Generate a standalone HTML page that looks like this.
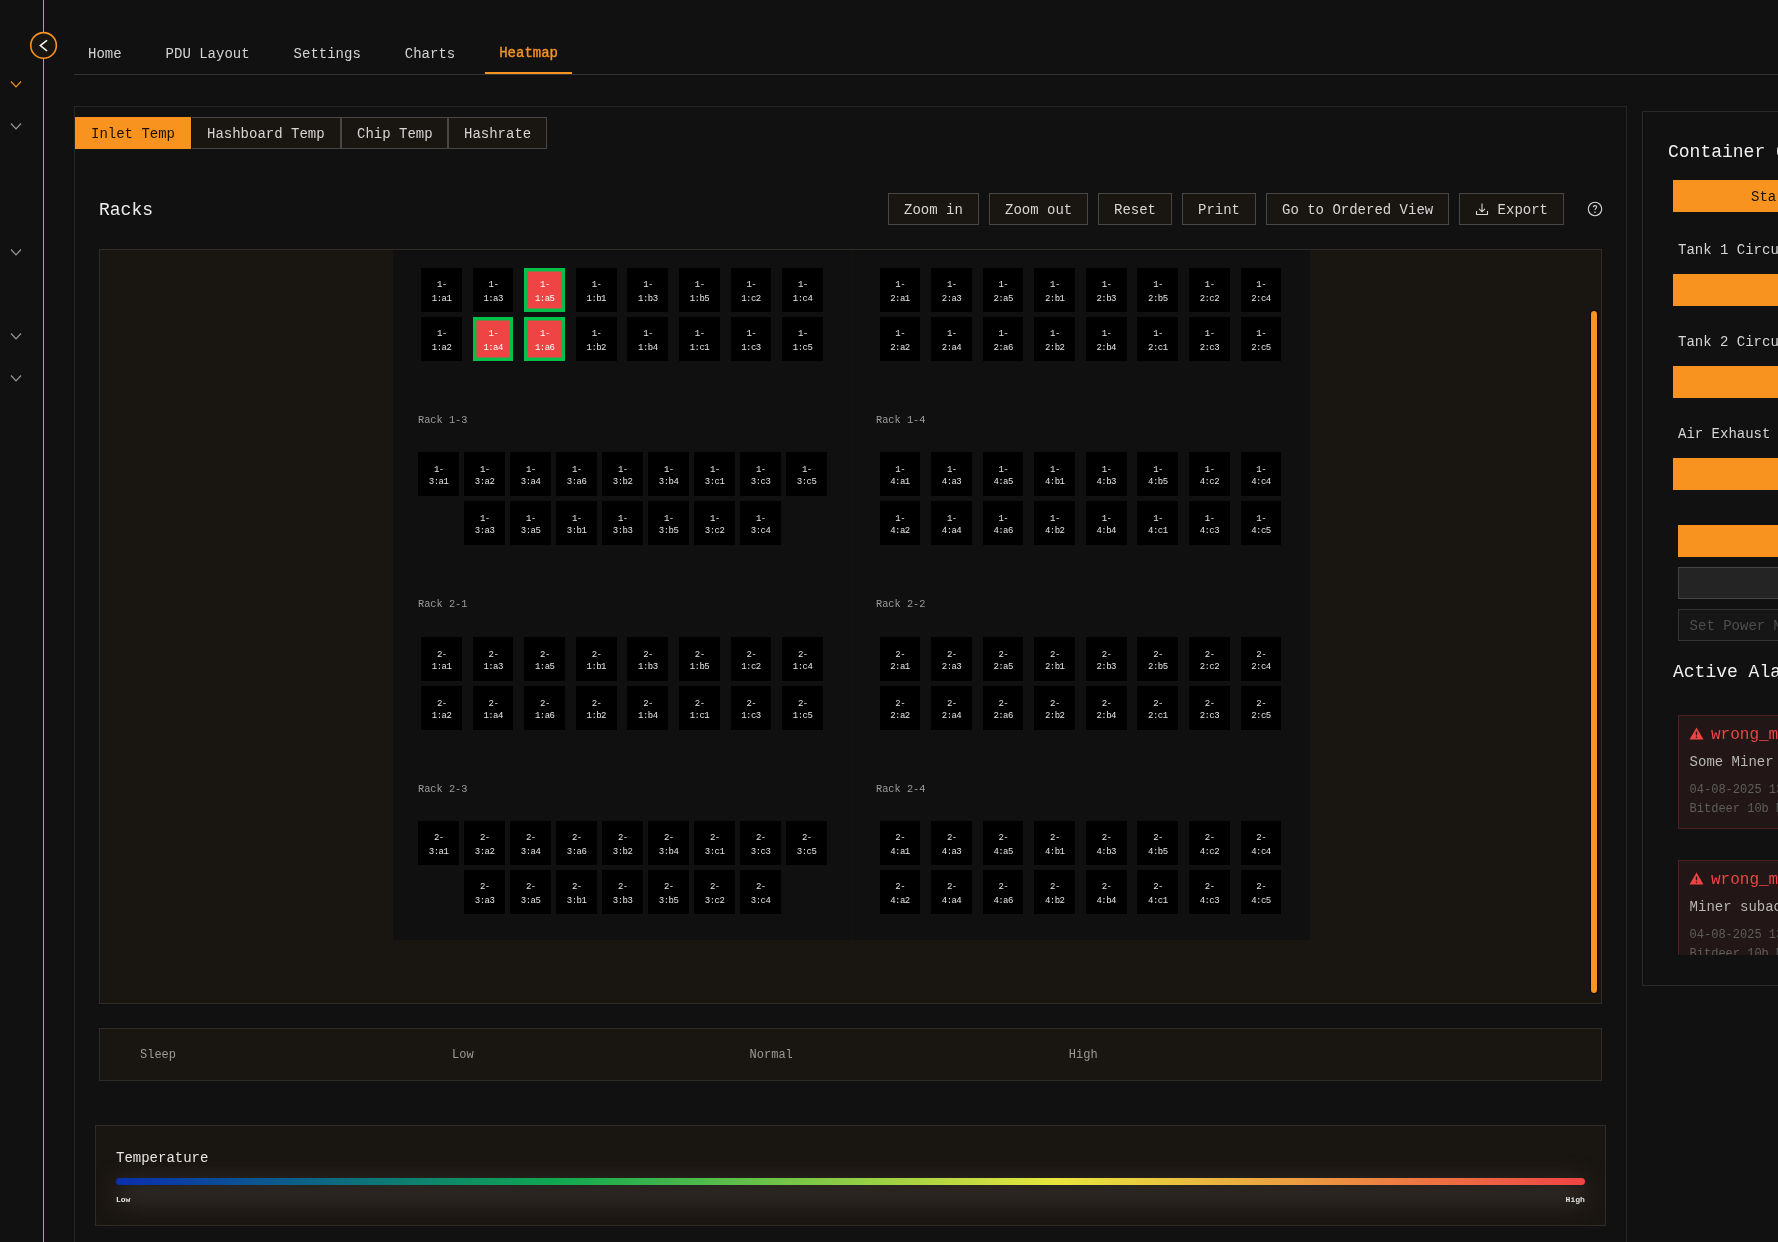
<!DOCTYPE html>
<html><head><meta charset="utf-8"><title>Heatmap</title>
<style>
html,body{margin:0;padding:0;}
body{width:1778px;height:1242px;overflow:hidden;background:#111111;position:relative;font-family:"Liberation Mono",monospace;}
.r{position:absolute;box-sizing:content-box;}
.t{position:absolute;line-height:1;white-space:pre;}
.c{position:absolute;width:40.7px;height:44px;background:#000;color:#e4e4e4;font-size:9px;font-weight:normal;line-height:14px;text-align:center;}
.c span{position:absolute;left:0;right:0;top:9.6px;letter-spacing:-0.55px;text-indent:0.55px;}
.c.s12 span{top:12px;line-height:12px;}
.c.red{background:#ef4444;box-shadow:inset 0 0 0 3.4px #03c04a;color:#fff;}
</style></head><body><div id="root" style="position:absolute;left:0;top:0;width:1778px;height:1242px;will-change:transform">
<div class="r" style="left:43px;top:0px;width:1px;height:1242px;background:#f7931e"></div>
<svg class="r" style="left:26px;top:28px" width="36" height="36" viewBox="26 28 36 36"><circle cx="43.55" cy="45.4" r="12.8" fill="#191511" stroke="#f7931e" stroke-width="1.6"/><polyline points="46.6,40.6 40.3,45.6 46.6,50.6" fill="none" stroke="#f4f4f4" stroke-width="1.5" stroke-linecap="round"/></svg>
<svg class="r" style="left:10px;top:79.5px" width="12" height="10" viewBox="0 0 12 10"><polyline points="1,1.5 6,7 11,1.5" fill="none" stroke="#f7931e" stroke-width="1.15"/></svg>
<svg class="r" style="left:10px;top:121.5px" width="12" height="10" viewBox="0 0 12 10"><polyline points="1,1.5 6,7 11,1.5" fill="none" stroke="#9a9a9a" stroke-width="1.15"/></svg>
<svg class="r" style="left:10px;top:247.6px" width="12" height="10" viewBox="0 0 12 10"><polyline points="1,1.5 6,7 11,1.5" fill="none" stroke="#9a9a9a" stroke-width="1.15"/></svg>
<svg class="r" style="left:10px;top:331.7px" width="12" height="10" viewBox="0 0 12 10"><polyline points="1,1.5 6,7 11,1.5" fill="none" stroke="#9a9a9a" stroke-width="1.15"/></svg>
<svg class="r" style="left:10px;top:373.6px" width="12" height="10" viewBox="0 0 12 10"><polyline points="1,1.5 6,7 11,1.5" fill="none" stroke="#9a9a9a" stroke-width="1.15"/></svg>
<div class="r" style="left:74px;top:74px;width:1704px;height:1px;background:#333333"></div>
<div class="t" style="left:88.00px;top:47.27px;font-size:14px;color:#d4d4d4;font-weight:normal;">Home</div>
<div class="t" style="left:165.60px;top:47.27px;font-size:14px;color:#d4d4d4;font-weight:normal;">PDU Layout</div>
<div class="t" style="left:293.60px;top:47.27px;font-size:14px;color:#d4d4d4;font-weight:normal;">Settings</div>
<div class="t" style="left:404.80px;top:47.27px;font-size:14px;color:#d4d4d4;font-weight:normal;">Charts</div>
<div class="t" style="left:499.20px;top:46.27px;font-size:14px;color:#f7931e;font-weight:normal;-webkit-text-stroke:0.4px #f7931e;">Heatmap</div>
<div class="r" style="left:485px;top:72px;width:87px;height:2px;background:#f7931e"></div>
<div class="r" style="left:74px;top:106px;width:1551px;height:1300px;border:1px solid #262626"></div>
<div class="r" style="left:191px;top:117px;width:148px;height:30px;background:#191511;border:1px solid #474747"></div>
<div class="r" style="left:341px;top:117px;width:105px;height:30px;background:#191511;border:1px solid #474747"></div>
<div class="r" style="left:448px;top:117px;width:97px;height:30px;background:#191511;border:1px solid #474747"></div>
<div class="r" style="left:191px;top:116px;width:1px;height:34px;background:#0a0d12"></div>
<div class="r" style="left:75px;top:117px;width:116px;height:32px;background:#f7931e"></div>
<div class="t" style="left:91.00px;top:127.27px;font-size:14px;color:#1a1208;font-weight:normal;">Inlet Temp</div>
<div class="t" style="left:207.00px;top:127.27px;font-size:14px;color:#d6d6d6;font-weight:normal;">Hashboard Temp</div>
<div class="t" style="left:357.00px;top:127.27px;font-size:14px;color:#d6d6d6;font-weight:normal;">Chip Temp</div>
<div class="t" style="left:464.00px;top:127.27px;font-size:14px;color:#d6d6d6;font-weight:normal;">Hashrate</div>
<div class="t" style="left:99.00px;top:201.21px;font-size:18px;color:#ececec;font-weight:normal;">Racks</div>
<div class="r" style="left:888px;top:193px;width:89px;height:30px;background:#191511;border:1px solid #474747"></div>
<div class="t" style="left:904.00px;top:203.27px;font-size:14px;color:#d6d6d6;font-weight:normal;">Zoom in</div>
<div class="r" style="left:989px;top:193px;width:97px;height:30px;background:#191511;border:1px solid #474747"></div>
<div class="t" style="left:1005.00px;top:203.27px;font-size:14px;color:#d6d6d6;font-weight:normal;">Zoom out</div>
<div class="r" style="left:1098px;top:193px;width:72px;height:30px;background:#191511;border:1px solid #474747"></div>
<div class="t" style="left:1114.00px;top:203.27px;font-size:14px;color:#d6d6d6;font-weight:normal;">Reset</div>
<div class="r" style="left:1182px;top:193px;width:72px;height:30px;background:#191511;border:1px solid #474747"></div>
<div class="t" style="left:1198.00px;top:203.27px;font-size:14px;color:#d6d6d6;font-weight:normal;">Print</div>
<div class="r" style="left:1266px;top:193px;width:181px;height:30px;background:#191511;border:1px solid #474747"></div>
<div class="t" style="left:1282.00px;top:203.27px;font-size:14px;color:#d6d6d6;font-weight:normal;">Go to Ordered View</div>
<div class="r" style="left:1459px;top:193px;width:103px;height:30px;background:#191511;border:1px solid #474747"></div>
<svg class="r" style="left:1475px;top:202px" width="14" height="14" viewBox="0 0 14 14"><path d="M7 1.5V9.5M4 6.8L7 9.8L10 6.8M1.5 9V12.5H12.5V9" fill="none" stroke="#d6d6d6" stroke-width="1.1"/></svg>
<div class="t" style="left:1497.60px;top:203.27px;font-size:14px;color:#d6d6d6;font-weight:normal;">Export</div>
<svg class="r" style="left:1587px;top:201px" width="16" height="16" viewBox="0 0 16 16"><circle cx="8" cy="8" r="6.7" fill="none" stroke="#d6d6d6" stroke-width="1.1"/><path d="M6.3 6.3C6.3 5.2 7 4.6 8 4.6C9 4.6 9.7 5.2 9.7 6.1C9.7 7.3 8 7.4 8 8.9" fill="none" stroke="#d6d6d6" stroke-width="1.1"/><circle cx="8" cy="11.3" r="0.8" fill="#d6d6d6"/></svg>
<div class="r" style="left:99px;top:249px;width:1501px;height:753px;border:1px solid #2f2b26;background:#191511"></div>
<div class="r" style="left:393px;top:250px;width:917px;height:690px;background:#101010;overflow:hidden">
<div class="r" style="left:458px;top:0px;width:1px;height:690px;background:#141311"></div>
<div class="c" style="left:28.20px;top:18.00px"><span>1-<br>1:a1</span></div>
<div class="c" style="left:79.77px;top:18.00px"><span>1-<br>1:a3</span></div>
<div class="c red" style="left:131.34px;top:18.00px"><span>1-<br>1:a5</span></div>
<div class="c" style="left:182.91px;top:18.00px"><span>1-<br>1:b1</span></div>
<div class="c" style="left:234.48px;top:18.00px"><span>1-<br>1:b3</span></div>
<div class="c" style="left:286.05px;top:18.00px"><span>1-<br>1:b5</span></div>
<div class="c" style="left:337.62px;top:18.00px"><span>1-<br>1:c2</span></div>
<div class="c" style="left:389.19px;top:18.00px"><span>1-<br>1:c4</span></div>
<div class="c" style="left:28.20px;top:67.00px"><span>1-<br>1:a2</span></div>
<div class="c red" style="left:79.77px;top:67.00px"><span>1-<br>1:a4</span></div>
<div class="c red" style="left:131.34px;top:67.00px"><span>1-<br>1:a6</span></div>
<div class="c" style="left:182.91px;top:67.00px"><span>1-<br>1:b2</span></div>
<div class="c" style="left:234.48px;top:67.00px"><span>1-<br>1:b4</span></div>
<div class="c" style="left:286.05px;top:67.00px"><span>1-<br>1:c1</span></div>
<div class="c" style="left:337.62px;top:67.00px"><span>1-<br>1:c3</span></div>
<div class="c" style="left:389.19px;top:67.00px"><span>1-<br>1:c5</span></div>
<div class="c" style="left:486.60px;top:18.00px"><span>1-<br>2:a1</span></div>
<div class="c" style="left:538.17px;top:18.00px"><span>1-<br>2:a3</span></div>
<div class="c" style="left:589.74px;top:18.00px"><span>1-<br>2:a5</span></div>
<div class="c" style="left:641.31px;top:18.00px"><span>1-<br>2:b1</span></div>
<div class="c" style="left:692.88px;top:18.00px"><span>1-<br>2:b3</span></div>
<div class="c" style="left:744.45px;top:18.00px"><span>1-<br>2:b5</span></div>
<div class="c" style="left:796.02px;top:18.00px"><span>1-<br>2:c2</span></div>
<div class="c" style="left:847.59px;top:18.00px"><span>1-<br>2:c4</span></div>
<div class="c" style="left:486.60px;top:67.00px"><span>1-<br>2:a2</span></div>
<div class="c" style="left:538.17px;top:67.00px"><span>1-<br>2:a4</span></div>
<div class="c" style="left:589.74px;top:67.00px"><span>1-<br>2:a6</span></div>
<div class="c" style="left:641.31px;top:67.00px"><span>1-<br>2:b2</span></div>
<div class="c" style="left:692.88px;top:67.00px"><span>1-<br>2:b4</span></div>
<div class="c" style="left:744.45px;top:67.00px"><span>1-<br>2:c1</span></div>
<div class="c" style="left:796.02px;top:67.00px"><span>1-<br>2:c3</span></div>
<div class="c" style="left:847.59px;top:67.00px"><span>1-<br>2:c5</span></div>
<div class="c s12" style="left:25.20px;top:202.35px"><span>1-<br>3:a1</span></div>
<div class="c s12" style="left:71.20px;top:202.35px"><span>1-<br>3:a2</span></div>
<div class="c s12" style="left:117.20px;top:202.35px"><span>1-<br>3:a4</span></div>
<div class="c s12" style="left:163.20px;top:202.35px"><span>1-<br>3:a6</span></div>
<div class="c s12" style="left:209.20px;top:202.35px"><span>1-<br>3:b2</span></div>
<div class="c s12" style="left:255.20px;top:202.35px"><span>1-<br>3:b4</span></div>
<div class="c s12" style="left:301.20px;top:202.35px"><span>1-<br>3:c1</span></div>
<div class="c s12" style="left:347.20px;top:202.35px"><span>1-<br>3:c3</span></div>
<div class="c s12" style="left:393.20px;top:202.35px"><span>1-<br>3:c5</span></div>
<div class="c s12" style="left:71.20px;top:251.35px"><span>1-<br>3:a3</span></div>
<div class="c s12" style="left:117.20px;top:251.35px"><span>1-<br>3:a5</span></div>
<div class="c s12" style="left:163.20px;top:251.35px"><span>1-<br>3:b1</span></div>
<div class="c s12" style="left:209.20px;top:251.35px"><span>1-<br>3:b3</span></div>
<div class="c s12" style="left:255.20px;top:251.35px"><span>1-<br>3:b5</span></div>
<div class="c s12" style="left:301.20px;top:251.35px"><span>1-<br>3:c2</span></div>
<div class="c s12" style="left:347.20px;top:251.35px"><span>1-<br>3:c4</span></div>
<div class="c s12" style="left:486.60px;top:202.35px"><span>1-<br>4:a1</span></div>
<div class="c s12" style="left:538.17px;top:202.35px"><span>1-<br>4:a3</span></div>
<div class="c s12" style="left:589.74px;top:202.35px"><span>1-<br>4:a5</span></div>
<div class="c s12" style="left:641.31px;top:202.35px"><span>1-<br>4:b1</span></div>
<div class="c s12" style="left:692.88px;top:202.35px"><span>1-<br>4:b3</span></div>
<div class="c s12" style="left:744.45px;top:202.35px"><span>1-<br>4:b5</span></div>
<div class="c s12" style="left:796.02px;top:202.35px"><span>1-<br>4:c2</span></div>
<div class="c s12" style="left:847.59px;top:202.35px"><span>1-<br>4:c4</span></div>
<div class="c s12" style="left:486.60px;top:251.35px"><span>1-<br>4:a2</span></div>
<div class="c s12" style="left:538.17px;top:251.35px"><span>1-<br>4:a4</span></div>
<div class="c s12" style="left:589.74px;top:251.35px"><span>1-<br>4:a6</span></div>
<div class="c s12" style="left:641.31px;top:251.35px"><span>1-<br>4:b2</span></div>
<div class="c s12" style="left:692.88px;top:251.35px"><span>1-<br>4:b4</span></div>
<div class="c s12" style="left:744.45px;top:251.35px"><span>1-<br>4:c1</span></div>
<div class="c s12" style="left:796.02px;top:251.35px"><span>1-<br>4:c3</span></div>
<div class="c s12" style="left:847.59px;top:251.35px"><span>1-<br>4:c5</span></div>
<div class="c s12" style="left:28.20px;top:386.70px"><span>2-<br>1:a1</span></div>
<div class="c s12" style="left:79.77px;top:386.70px"><span>2-<br>1:a3</span></div>
<div class="c s12" style="left:131.34px;top:386.70px"><span>2-<br>1:a5</span></div>
<div class="c s12" style="left:182.91px;top:386.70px"><span>2-<br>1:b1</span></div>
<div class="c s12" style="left:234.48px;top:386.70px"><span>2-<br>1:b3</span></div>
<div class="c s12" style="left:286.05px;top:386.70px"><span>2-<br>1:b5</span></div>
<div class="c s12" style="left:337.62px;top:386.70px"><span>2-<br>1:c2</span></div>
<div class="c s12" style="left:389.19px;top:386.70px"><span>2-<br>1:c4</span></div>
<div class="c s12" style="left:28.20px;top:435.70px"><span>2-<br>1:a2</span></div>
<div class="c s12" style="left:79.77px;top:435.70px"><span>2-<br>1:a4</span></div>
<div class="c s12" style="left:131.34px;top:435.70px"><span>2-<br>1:a6</span></div>
<div class="c s12" style="left:182.91px;top:435.70px"><span>2-<br>1:b2</span></div>
<div class="c s12" style="left:234.48px;top:435.70px"><span>2-<br>1:b4</span></div>
<div class="c s12" style="left:286.05px;top:435.70px"><span>2-<br>1:c1</span></div>
<div class="c s12" style="left:337.62px;top:435.70px"><span>2-<br>1:c3</span></div>
<div class="c s12" style="left:389.19px;top:435.70px"><span>2-<br>1:c5</span></div>
<div class="c s12" style="left:486.60px;top:386.70px"><span>2-<br>2:a1</span></div>
<div class="c s12" style="left:538.17px;top:386.70px"><span>2-<br>2:a3</span></div>
<div class="c s12" style="left:589.74px;top:386.70px"><span>2-<br>2:a5</span></div>
<div class="c s12" style="left:641.31px;top:386.70px"><span>2-<br>2:b1</span></div>
<div class="c s12" style="left:692.88px;top:386.70px"><span>2-<br>2:b3</span></div>
<div class="c s12" style="left:744.45px;top:386.70px"><span>2-<br>2:b5</span></div>
<div class="c s12" style="left:796.02px;top:386.70px"><span>2-<br>2:c2</span></div>
<div class="c s12" style="left:847.59px;top:386.70px"><span>2-<br>2:c4</span></div>
<div class="c s12" style="left:486.60px;top:435.70px"><span>2-<br>2:a2</span></div>
<div class="c s12" style="left:538.17px;top:435.70px"><span>2-<br>2:a4</span></div>
<div class="c s12" style="left:589.74px;top:435.70px"><span>2-<br>2:a6</span></div>
<div class="c s12" style="left:641.31px;top:435.70px"><span>2-<br>2:b2</span></div>
<div class="c s12" style="left:692.88px;top:435.70px"><span>2-<br>2:b4</span></div>
<div class="c s12" style="left:744.45px;top:435.70px"><span>2-<br>2:c1</span></div>
<div class="c s12" style="left:796.02px;top:435.70px"><span>2-<br>2:c3</span></div>
<div class="c s12" style="left:847.59px;top:435.70px"><span>2-<br>2:c5</span></div>
<div class="c" style="left:25.20px;top:571.05px"><span>2-<br>3:a1</span></div>
<div class="c" style="left:71.20px;top:571.05px"><span>2-<br>3:a2</span></div>
<div class="c" style="left:117.20px;top:571.05px"><span>2-<br>3:a4</span></div>
<div class="c" style="left:163.20px;top:571.05px"><span>2-<br>3:a6</span></div>
<div class="c" style="left:209.20px;top:571.05px"><span>2-<br>3:b2</span></div>
<div class="c" style="left:255.20px;top:571.05px"><span>2-<br>3:b4</span></div>
<div class="c" style="left:301.20px;top:571.05px"><span>2-<br>3:c1</span></div>
<div class="c" style="left:347.20px;top:571.05px"><span>2-<br>3:c3</span></div>
<div class="c" style="left:393.20px;top:571.05px"><span>2-<br>3:c5</span></div>
<div class="c" style="left:71.20px;top:620.05px"><span>2-<br>3:a3</span></div>
<div class="c" style="left:117.20px;top:620.05px"><span>2-<br>3:a5</span></div>
<div class="c" style="left:163.20px;top:620.05px"><span>2-<br>3:b1</span></div>
<div class="c" style="left:209.20px;top:620.05px"><span>2-<br>3:b3</span></div>
<div class="c" style="left:255.20px;top:620.05px"><span>2-<br>3:b5</span></div>
<div class="c" style="left:301.20px;top:620.05px"><span>2-<br>3:c2</span></div>
<div class="c" style="left:347.20px;top:620.05px"><span>2-<br>3:c4</span></div>
<div class="c" style="left:486.60px;top:571.05px"><span>2-<br>4:a1</span></div>
<div class="c" style="left:538.17px;top:571.05px"><span>2-<br>4:a3</span></div>
<div class="c" style="left:589.74px;top:571.05px"><span>2-<br>4:a5</span></div>
<div class="c" style="left:641.31px;top:571.05px"><span>2-<br>4:b1</span></div>
<div class="c" style="left:692.88px;top:571.05px"><span>2-<br>4:b3</span></div>
<div class="c" style="left:744.45px;top:571.05px"><span>2-<br>4:b5</span></div>
<div class="c" style="left:796.02px;top:571.05px"><span>2-<br>4:c2</span></div>
<div class="c" style="left:847.59px;top:571.05px"><span>2-<br>4:c4</span></div>
<div class="c" style="left:486.60px;top:620.05px"><span>2-<br>4:a2</span></div>
<div class="c" style="left:538.17px;top:620.05px"><span>2-<br>4:a4</span></div>
<div class="c" style="left:589.74px;top:620.05px"><span>2-<br>4:a6</span></div>
<div class="c" style="left:641.31px;top:620.05px"><span>2-<br>4:b2</span></div>
<div class="c" style="left:692.88px;top:620.05px"><span>2-<br>4:b4</span></div>
<div class="c" style="left:744.45px;top:620.05px"><span>2-<br>4:c1</span></div>
<div class="c" style="left:796.02px;top:620.05px"><span>2-<br>4:c3</span></div>
<div class="c" style="left:847.59px;top:620.05px"><span>2-<br>4:c5</span></div>
<div class="t" style="left:25.00px;top:164.91px;font-size:10.3px;color:#9c9c9c;font-weight:normal;">Rack 1-3</div>
<div class="t" style="left:483.00px;top:164.91px;font-size:10.3px;color:#9c9c9c;font-weight:normal;">Rack 1-4</div>
<div class="t" style="left:25.00px;top:349.26px;font-size:10.3px;color:#9c9c9c;font-weight:normal;">Rack 2-1</div>
<div class="t" style="left:483.00px;top:349.26px;font-size:10.3px;color:#9c9c9c;font-weight:normal;">Rack 2-2</div>
<div class="t" style="left:25.00px;top:533.61px;font-size:10.3px;color:#9c9c9c;font-weight:normal;">Rack 2-3</div>
<div class="t" style="left:483.00px;top:533.61px;font-size:10.3px;color:#9c9c9c;font-weight:normal;">Rack 2-4</div>
</div>
<div class="r" style="left:1591px;top:311px;width:6px;height:682px;border-radius:3px;background:#f7951f;box-shadow:0 0 0 1px #07090c"></div>
<div class="r" style="left:99px;top:1028px;width:1501px;height:51px;border:1px solid #2f2b26;background:#191511"></div>
<div class="t" style="left:140.00px;top:1048.81px;font-size:12px;color:#9a9a9a;font-weight:normal;">Sleep</div>
<div class="t" style="left:452.00px;top:1048.81px;font-size:12px;color:#9a9a9a;font-weight:normal;">Low</div>
<div class="t" style="left:749.60px;top:1048.81px;font-size:12px;color:#9a9a9a;font-weight:normal;">Normal</div>
<div class="t" style="left:1068.80px;top:1048.81px;font-size:12px;color:#9a9a9a;font-weight:normal;">High</div>
<div class="r" style="left:95px;top:1125px;width:1509px;height:99px;border:1px solid #2f2b26;background:#191511;overflow:hidden"><div style="position:absolute;left:21px;top:55px;width:1469px;height:22px;background:rgba(75,68,62,0.55);filter:blur(12px);border-radius:20px"></div></div>
<div class="t" style="left:116.00px;top:1151.27px;font-size:14px;color:#e6e6e6;font-weight:normal;">Temperature</div>
<div class="r" style="left:116px;top:1178px;width:1469px;height:7px;border-radius:4px;background:linear-gradient(90deg,#0a2eb0 0%,#10a850 30%,#e8e63e 64%,#ef4444 100%)"></div>
<div class="t" style="left:116.00px;top:1195.87px;font-size:8px;color:#e6e6e6;font-weight:bold;">Low</div>
<div class="t" style="left:1565.60px;top:1195.87px;font-size:8px;color:#e0e0e0;font-weight:bold;">High</div>
<div class="r" style="left:1642px;top:111px;width:300px;height:873px;border:1px solid #2a2a2a"></div>
<div class="t" style="left:1668.00px;top:143.21px;font-size:18px;color:#f0f0f0;font-weight:normal;">Container Controls</div>
<div class="r" style="left:1673px;top:180px;width:200px;height:32px;background:#f7931e"></div>
<div class="t" style="left:1751.00px;top:190.27px;font-size:14px;color:#1a1208;font-weight:normal;">Start</div>
<div class="t" style="left:1678.00px;top:242.67px;font-size:14px;color:#d6d6d6;font-weight:normal;">Tank 1 Circulation</div>
<div class="r" style="left:1673px;top:274px;width:200px;height:32px;background:#f7931e"></div>
<div class="t" style="left:1678.00px;top:334.67px;font-size:14px;color:#d6d6d6;font-weight:normal;">Tank 2 Circulation</div>
<div class="r" style="left:1673px;top:366px;width:200px;height:32px;background:#f7931e"></div>
<div class="t" style="left:1678.00px;top:426.87px;font-size:14px;color:#d6d6d6;font-weight:normal;">Air Exhaust Fan</div>
<div class="r" style="left:1673px;top:458px;width:200px;height:32px;background:#f7931e"></div>
<div class="r" style="left:1678px;top:525px;width:200px;height:32px;background:#f7931e"></div>
<div class="r" style="left:1678px;top:567px;width:200px;height:30px;background:#242424;border:1px solid #454545"></div>
<div class="r" style="left:1678px;top:609px;width:200px;height:30px;background:#161616;border:1px solid #333333"></div>
<div class="t" style="left:1689.60px;top:619.47px;font-size:14px;color:#4e4e4e;font-weight:normal;">Set Power Mode</div>
<div class="t" style="left:1673.00px;top:662.51px;font-size:18px;color:#f0f0f0;font-weight:normal;">Active Alarms</div>
<div class="r" style="left:1670px;top:700px;width:200px;height:255px;overflow:hidden">
<div class="r" style="left:8px;top:15px;width:200px;height:112px;background:#221616;border:1px solid #4a2222"></div>
<svg class="r" style="left:18.5px;top:27px" width="15" height="13" viewBox="0 0 15 13"><path d="M7.5 0.5L14.5 12.5H0.5Z" fill="#ef4444"/><path d="M7.5 4.5V8.3" stroke="#221616" stroke-width="1.4"/><circle cx="7.5" cy="10.2" r="0.8" fill="#221616"/></svg>
<div class="t" style="left:41.00px;top:27.04px;font-size:16px;color:#ef4444;font-weight:normal;">wrong_miner_subaccount</div>
<div class="t" style="left:19.60px;top:55.47px;font-size:14px;color:#b6b6b6;font-weight:normal;">Some Miner subaccount</div>
<div class="t" style="left:19.60px;top:83.91px;font-size:12px;color:#5e5e5e;font-weight:normal;">04-08-2025 13:45</div>
<div class="t" style="left:19.60px;top:103.41px;font-size:12px;color:#5e5e5e;font-weight:normal;">Bitdeer 10b Miner</div>
<div class="r" style="left:8px;top:160px;width:200px;height:112px;background:#221616;border:1px solid #4a2222"></div>
<svg class="r" style="left:18.5px;top:172px" width="15" height="13" viewBox="0 0 15 13"><path d="M7.5 0.5L14.5 12.5H0.5Z" fill="#ef4444"/><path d="M7.5 4.5V8.3" stroke="#221616" stroke-width="1.4"/><circle cx="7.5" cy="10.2" r="0.8" fill="#221616"/></svg>
<div class="t" style="left:41.00px;top:172.04px;font-size:16px;color:#ef4444;font-weight:normal;">wrong_miner_subaccount</div>
<div class="t" style="left:19.60px;top:200.47px;font-size:14px;color:#b6b6b6;font-weight:normal;">Miner subaccount</div>
<div class="t" style="left:19.60px;top:228.91px;font-size:12px;color:#5e5e5e;font-weight:normal;">04-08-2025 13:45</div>
<div class="t" style="left:19.60px;top:248.41px;font-size:12px;color:#5e5e5e;font-weight:normal;">Bitdeer 10b Miner</div>
</div>
</div></body></html>
